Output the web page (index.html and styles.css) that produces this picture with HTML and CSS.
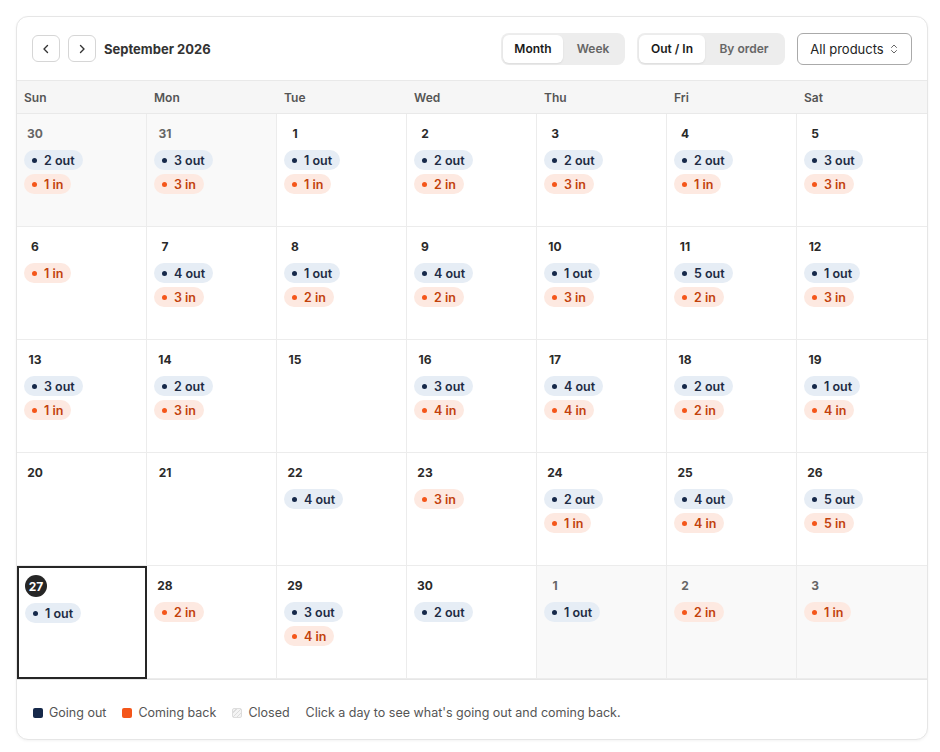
FILE: index.html
```html
<!DOCTYPE html>
<html>
<head>
<meta charset="utf-8">
<link rel="stylesheet" href="styles.css">
</head>
<body>
<div class="card">
  <div class="header">
    <div class="nav">
      <button class="iconbtn"><svg width="12" height="12" viewBox="0 0 12 12"><path d="M7.5 2.5 4 6l3.5 3.5" fill="none" stroke="#333" stroke-width="1.4" stroke-linecap="round" stroke-linejoin="round"/></svg></button>
      <button class="iconbtn"><svg width="12" height="12" viewBox="0 0 12 12"><path d="M4.5 2.5 8 6l-3.5 3.5" fill="none" stroke="#333" stroke-width="1.4" stroke-linecap="round" stroke-linejoin="round"/></svg></button>
      <div class="title">September 2026</div>
    </div>
    <div class="controls">
      <div class="seg"><span class="opt active w60">Month</span><span class="opt w60">Week</span></div>
      <div class="seg"><span class="opt active w66">Out / In</span><span class="opt w78">By order</span></div>
      <div class="select">All products <svg width="10" height="12" viewBox="0 0 10 12"><path d="M2.5 4.5 5 2l2.5 2.5M2.5 7.5 5 10l2.5-2.5" fill="none" stroke="#666" stroke-width="1" stroke-linecap="round" stroke-linejoin="round"/></svg></div>
    </div>
  </div>
  <div class="dow">
    <div>Sun</div><div>Mon</div><div>Tue</div><div>Wed</div><div>Thu</div><div>Fri</div><div>Sat</div>
  </div>
  <div class="grid" id="grid"></div>
  <div class="footer">
    <span class="leg"><span class="sw out"></span>Going out</span>
    <span class="leg"><span class="sw in"></span>Coming back</span>
    <span class="leg"><span class="sw closed"></span>Closed</span>
    <span class="hint">Click a day to see what's going out and coming back.</span>
  </div>
</div>
<script>
var days = [
 [30,2,1,1],[31,3,3,1],[1,1,1],[2,2,2],[3,2,3],[4,2,1],[5,3,3],
 [6,0,1],[7,4,3],[8,1,2],[9,4,2],[10,1,3],[11,5,2],[12,1,3],
 [13,3,1],[14,2,3],[15,0,0],[16,3,4],[17,4,4],[18,2,2],[19,1,4],
 [20,0,0],[21,0,0],[22,4,0],[23,0,3],[24,2,1],[25,4,4],[26,5,5],
 [27,1,0,0,1],[28,0,2],[29,3,4],[30,2,0],[1,1,0,1],[2,0,2,1],[3,0,1,1]
];
var g = document.getElementById('grid');
days.forEach(function(d, i){
  var c = document.createElement('div');
  c.className = 'cell' + (d[3] ? ' muted' : '') + (d[4] ? ' today' : '') + ((i % 7) === 6 ? ' last' : '');
  var h = '<div class="num">' + d[0] + '</div>';
  if (d[1]) h += '<span class="chip cout"><i></i>' + d[1] + ' out</span>';
  if (d[2]) h += '<span class="chip cin"><i></i>' + d[2] + ' in</span>';
  c.innerHTML = h;
  g.appendChild(c);
});
</script>
</body>
</html>
```
FILE: styles.css
```css
* { box-sizing: border-box; }
body {
  margin: 0;
  padding: 16px;
  background: #fff;
  font-family: Inter, "Noto Sans", sans-serif;
  color: #222;
}
.card {
  width: 912px;
  height: 724px;
  border: 1px solid #e6e6e6;
  border-radius: 12px;
  overflow: hidden;
  background: #fff;
  box-shadow: 0 1px 3px rgba(0,0,0,0.05);
  display: flex;
  flex-direction: column;
}
.header {
  height: 64px;
  flex: none;
  padding: 0 15px 0 15px;
  border-bottom: 1px solid #e9e9e9;
  display: flex;
  align-items: center;
  justify-content: space-between;
}
.nav { display: flex; align-items: center; gap: 8px; }
.iconbtn {
  width: 28px; height: 27px;
  border: 1px solid #d6d6d6;
  border-radius: 6px;
  background: #fff;
  display: flex; align-items: center; justify-content: center;
  padding: 0;
}
.title { font-size: 13px; font-weight: 700; color: #333; }
.controls { display: flex; align-items: center; gap: 12px; }
.seg {
  display: flex;
  background: #ededed;
  border-radius: 8px;
  padding: 2px;
}
.opt {
  height: 28px;
  display: flex; align-items: center; justify-content: center;
  font-size: 12px; font-weight: 600;
  color: #666;
  border-radius: 6px;
}
.opt.active { background: #fff; color: #1a1a1a; box-shadow: 0 1px 2px rgba(0,0,0,0.08); }
.w60 { width: 60px; }
.w66 { width: 66px; }
.w78 { width: 78px; }
.select {
  width: 115px; height: 32px;
  border: 1px solid #aaa;
  border-radius: 6px;
  display: flex; align-items: center; justify-content: center; gap: 5px;
  font-size: 13px; color: #222;
}
.dow {
  flex: none;
  display: grid;
  grid-template-columns: repeat(7, 1fr);
  height: 33px;
  background: #f6f6f6;
  border-bottom: 1px solid #e9e9e9;
}
.dow div {
  padding-left: 7px;
  display: flex; align-items: center;
  font-size: 12px; font-weight: 600; color: #555;
}
.grid {
  flex: none;
  display: grid;
  grid-template-columns: repeat(7, 1fr);
  grid-auto-rows: 113px;
  border-bottom: 1px solid #e6e6e6;
}
.cell {
  border-right: 1px solid #ececec;
  border-bottom: 1px solid #ececec;
  padding: 8px 7px;
  display: flex; flex-direction: column; align-items: flex-start;
  gap: 4px;
}
.cell.last { border-right: none; }
.cell.muted { background: #f9f9f9; }
.cell.muted .num { color: #666; }
.num {
  min-width: 22px; height: 22px;
  display: flex; align-items: center; justify-content: center;
  font-size: 12px; font-weight: 700; color: #2a2a2a;
  margin-bottom: 2px;
}
.cell.today { border: 2px solid #262626; padding: 7px 6px; }
.cell.today .num { background: #262626; color: #fff; border-radius: 50%; width: 22px; }
.chip {
  height: 20px;
  display: inline-flex; align-items: center; gap: 7px;
  padding: 0 8px;
  border-radius: 10px;
  font-size: 12.5px; font-weight: 600;
}
.chip i { width: 5px; height: 5px; border-radius: 50%; display: block; }
.cout { background: #e6edf5; color: #1d2b44; }
.cout i { background: #16294a; }
.cin { background: #fde9e1; color: #c2410c; }
.cin i { background: #f4561a; }
.footer {
  flex: 1;
  padding: 6px 16px 0;
  display: flex; align-items: center; gap: 16px;
  font-size: 12.5px; color: #555;
}
.leg { display: flex; align-items: center; gap: 6px; }
.sw { width: 10px; height: 10px; border-radius: 2px; display: block; }
.sw.out { background: #16294a; }
.sw.in { background: #f4561a; }
.sw.closed {
  border: 1px solid #ddd;
  background: repeating-linear-gradient(135deg, #f4f4f4 0 2px, #dcdcdc 2px 3px);
}
.hint { margin-left: 0; }
```
